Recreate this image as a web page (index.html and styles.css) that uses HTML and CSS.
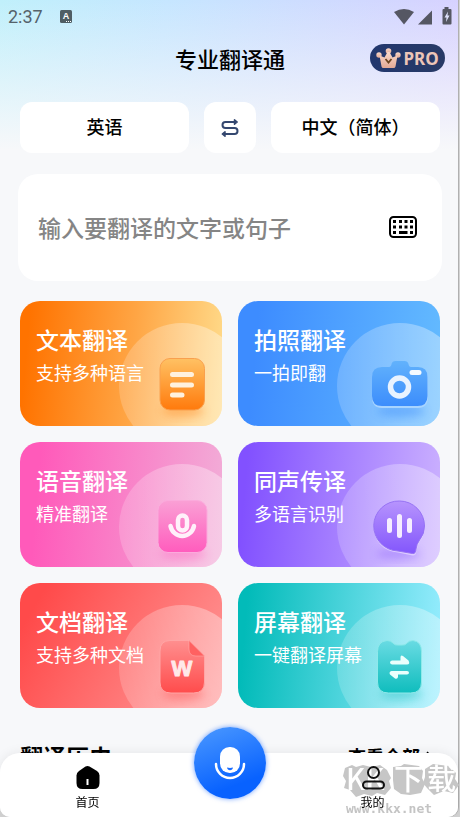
FILE: index.html
```html
<!DOCTYPE html>
<html lang="zh-CN">
<head>
  <meta charset="UTF-8">
  <meta name="viewport" content="width=device-width, initial-scale=1">
  <title>专业翻译通</title>
  <link rel="stylesheet" href="styles.css">
</head>
<body>
<div class="screen">
  <div class="status">
    <span class="time">2:37</span>
    <svg class="ime" width="12" height="13" viewBox="0 0 12 13">
      <rect width="12" height="13" rx="1.5" fill="#4f5d64"/>
      <text class="ime-text" x="6" y="9" text-anchor="middle">A</text>
      <path d="M6 11.5h1M8 11.5h1M10 11.5h1" stroke="#fff"/>
    </svg>
    <svg class="signal" width="58" height="18" viewBox="0 0 58 18">
      <path d="M0 5Q10-1 20 5L10 17.500Z" fill="#555763"/>
      <path d="M38 3.500V17.500H24Z" fill="#555763"/>
      <path d="M50.500 0h4v2h2q1 0 1 1v13.500q0 1-1 1h-7q-1 0-1-1V3q0-1 1-1h1Z" fill="#555763"/>
      <path d="M54 4.500l-3.500 6h2l-.5 4.500 3.500-6.500h-2Z" fill="#dfe2fb"/>
    </svg>
  </div>

  <header class="header">
    <h1>专业翻译通</h1>
    <button class="pro" type="button">
      <svg width="25" height="21" viewBox="0 0 25 21">
        <defs>
          <linearGradient id="crown" x1="0" y1="0" x2="0" y2="1">
            <stop offset="0" stop-color="#f9d9cb"/>
            <stop offset="1" stop-color="#e3a995"/>
          </linearGradient>
        </defs>
        <g fill="url(#crown)">
          <circle cx="12.500" cy="3" r="2.800"/>
          <circle cx="3" cy="7" r="2.700"/>
          <circle cx="22" cy="7" r="2.700"/>
          <path d="M3.500 7.500L8.500 9.500 11.500 4h2l3 5.500 5-2-2 11q-.3 1.500-2 1.500h-10q-1.700 0-2-1.500Z"/>
        </g>
        <path d="M9.500 11l3 3.500 3-3.500" fill="none" stroke="#6b4420" stroke-width="1.800"/>
      </svg>
      <span>PRO</span>
    </button>
  </header>

  <main class="main">
    <div class="langs">
      <button class="lang" type="button">英语</button>
      <button class="swap" type="button" aria-label="交换语言">
        <svg width="20" height="20" viewBox="0 0 20 20" fill="none" stroke="#34476f" stroke-width="2" stroke-linecap="round" stroke-linejoin="round">
          <path d="M15 4H5.500a3 3 0 0 0 0 6h9a3 3 0 0 1 0 6H5"/>
          <path d="M14.500 1.800L17.200 4l-2.700 2.200ZM5 13.800L2.300 16 5 18.200Z" fill="#34476f" stroke-width="1.500"/>
        </svg>
      </button>
      <button class="lang" type="button">中文（简体）</button>
    </div>

    <div class="input-box">
      <input type="text" aria-label="翻译内容" placeholder="输入要翻译的文字或句子">
      <button class="keyboard" type="button" aria-label="键盘">
        <svg width="28" height="22" viewBox="0 0 28 22">
          <rect x="1" y="1" width="26" height="20" rx="3.500" fill="none" stroke="#000" stroke-width="2"/>
          <path d="M4 5.500h3M10 5.500h3M15.500 5.500h3M21 5.500h3M4 11h3M10 11h3M15.500 11h3M21 11h3M4 16.500h3M10 16.500h8.500M21 16.500h3" stroke="#000" stroke-width="2.800"/>
        </svg>
      </button>
    </div>

    <div class="cards">
      <a class="card text" href="#">
        <strong>文本翻译</strong><span>支持多种语言</span>
        <svg class="art" viewBox="99 22 103 103">
          <defs>
            <linearGradient id="g1" x1="0" y1="0" x2="0" y2="1">
              <stop offset="0" stop-color="#ffc163"/>
              <stop offset="1" stop-color="#ff7a0c"/>
            </linearGradient>
            <linearGradient id="halo" x1="0" y1="0" x2="1" y2="0">
              <stop offset="0" stop-color="#fff" stop-opacity=".18"/>
              <stop offset="1" stop-color="#fff" stop-opacity=".4"/>
            </linearGradient>
            <filter id="soft" x="-50%" y="-50%" width="200%" height="200%">
              <feGaussianBlur stdDeviation="4"/>
            </filter>
          </defs>
          <circle cx="162" cy="85" r="63" fill="url(#halo)"/>
          <ellipse cx="163" cy="110" rx="21" ry="6" fill="#ff8a20" opacity=".45" filter="url(#soft)"/>
          <rect x="140" y="57.500" width="44.500" height="51.500" rx="10" fill="url(#g1)" stroke="#f9a04e"/>
          <path d="M152.500 73.500h19M152.500 84h19M152.500 94h9.500" stroke="#fff1de" stroke-width="5" stroke-linecap="round"/>
        </svg>
      </a>
      <a class="card photo" href="#">
        <strong>拍照翻译</strong><span>一拍即翻</span>
        <svg class="art" viewBox="99 22 103 103">
          <defs>
            <linearGradient id="g2" x1="0" y1="0" x2="0" y2="1">
              <stop offset="0" stop-color="#62b2fc"/>
              <stop offset="1" stop-color="#3c8dfc"/>
            </linearGradient>
          </defs>
          <circle cx="162" cy="85" r="63" fill="url(#halo)"/>
          <ellipse cx="163" cy="110" rx="24" ry="6" fill="#3c8dfc" opacity=".45" filter="url(#soft)"/>
          <path d="M144 67h7q2 0 2.500-3 .8-3 4-3h9q3.200 0 4 3 .5 3 2.500 3h7q10 0 10 10v19q0 11-10 11h-36q-10 0-10-11V77q0-10 10-10Z" fill="#a8d4ff"/>
          <path d="M144 66h7q2 0 2.500-3 .8-3 4-3h9q3.200 0 4 3 .5 3 2.500 3h7q9.500 0 9.500 10v19q0 10-10 10h-35.500q-10 0-10-10V76q0-10 10-10Z" fill="url(#g2)"/>
          <circle cx="161.500" cy="86" r="9" fill="none" stroke="#e9f3ff" stroke-width="5.500"/>
          <path d="M174 71.500h7" stroke="#f4faff" stroke-width="5" stroke-linecap="round"/>
        </svg>
      </a>
      <a class="card voice" href="#">
        <strong>语音翻译</strong><span>精准翻译</span>
        <svg class="art" viewBox="99 22 103 103">
          <defs>
            <linearGradient id="g3" x1="0" y1="0" x2="0" y2="1">
              <stop offset="0" stop-color="#faa0d5"/>
              <stop offset="1" stop-color="#ff5cbd"/>
            </linearGradient>
          </defs>
          <circle cx="162" cy="85" r="63" fill="url(#halo)"/>
          <ellipse cx="163" cy="112" rx="23" ry="6" fill="#ff5cbd" opacity=".4" filter="url(#soft)"/>
          <rect x="138" y="58.500" width="49" height="52" rx="10" fill="url(#g3)" stroke="#fbaadc"/>
          <rect x="158" y="73.500" width="9" height="15" rx="4.500" fill="none" stroke="#fff0fa" stroke-width="4.500"/>
          <path d="M150.500 84a12 12.500 0 0 0 23.500 0" fill="none" stroke="#fff0fa" stroke-width="4.500" stroke-linecap="round"/>
        </svg>
      </a>
      <a class="card live" href="#">
        <strong>同声传译</strong><span>多语言识别</span>
        <svg class="art" viewBox="99 22 103 103">
          <defs>
            <linearGradient id="g4" x1="0" y1="0" x2="0" y2="1">
              <stop offset="0" stop-color="#b794fd"/>
              <stop offset="1" stop-color="#8356fc"/>
            </linearGradient>
          </defs>
          <circle cx="162" cy="85" r="63" fill="url(#halo)"/>
          <ellipse cx="160" cy="112" rx="22" ry="5" fill="#8356fc" opacity=".4" filter="url(#soft)"/>
          <path d="M161.500 60.500a25 25 0 0 1 25 25q0 8-4.500 14-3 5-3.500 9.500-.5 5-4 4.500L160 110.500a25 25 0 0 1 1.500-50Z" fill="#dccbff"/>
          <path d="M161.500 59a25 25 0 0 1 25 25q0 8-5 14-3 4-3.500 9-.2 5-3.500 4.500L160 109a25 25 0 0 1 1.500-50Z" fill="url(#g4)" stroke="#9672f4"/>
          <path d="M151.500 78.500v10M161.500 74.500v19M171.500 78.500v10" stroke="#f6edff" stroke-width="5" stroke-linecap="round"/>
        </svg>
      </a>
      <a class="card doc" href="#">
        <strong>文档翻译</strong><span>支持多种文档</span>
        <svg class="art" viewBox="99 22 103 103">
          <defs>
            <linearGradient id="g5" x1="0" y1="0" x2="0" y2="1">
              <stop offset="0" stop-color="#ff8f8f"/>
              <stop offset="1" stop-color="#ff4c4c"/>
            </linearGradient>
          </defs>
          <circle cx="162" cy="85" r="63" fill="url(#halo)"/>
          <ellipse cx="163" cy="111" rx="21" ry="6" fill="#ff4c4c" opacity=".4" filter="url(#soft)"/>
          <path d="M150 57.500h19L184.500 73v26q0 11-11 11H151q-11 0-11-11V68q0-10.500 10-10.500Z" fill="url(#g5)" stroke="#ffa5a5"/>
          <path d="M169 57.500L184.500 73H176q-7 0-7-7Z" fill="#ff6161" stroke="#ffb0b0" stroke-width=".5"/>
          <text class="word" x="162" y="93" text-anchor="middle">W</text>
        </svg>
      </a>
      <a class="card display" href="#">
        <strong>屏幕翻译</strong><span>一键翻译屏幕</span>
        <svg class="art" viewBox="99 22 103 103">
          <defs>
            <linearGradient id="g6" x1="0" y1="0" x2="0" y2="1">
              <stop offset="0" stop-color="#69dbe3"/>
              <stop offset="1" stop-color="#0fbdbd"/>
            </linearGradient>
          </defs>
          <circle cx="162" cy="85" r="63" fill="url(#halo)"/>
          <ellipse cx="163" cy="111" rx="21" ry="6" fill="#0fbdbd" opacity=".4" filter="url(#soft)"/>
          <path d="M149 57.500q4 0 6 2.500t5 2h4q3 .5 5-2t6-2.500q8.500 1 8.500 11V99q0 11-11 11h-22q-11 0-11-11V68.500q0-10 9.500-11Z" fill="url(#g6)" stroke="#8ee9ea"/>
          <path d="M154 77.500h8.500v-3q0-3 2.500-1.500l5.500 4.500q2 4-1.500 4h-15q-2-.3-2-2t2-2ZM169 88h-15.500q-3 1-1.500 3.500l5 4q2.500 1 3-1.500v-2.500h9q2-.3 2-1.800t-2-1.700Z" fill="#eafffc"/>
        </svg>
      </a>
    </div>

    <div class="history">
      <h2>翻译历史</h2>
      <a href="#">查看全部<svg width="6" height="10" viewBox="0 0 6 10"><path d="M1 1l4 4-4 4" fill="none" stroke="#000" stroke-width="1.500"/></svg></a>
    </div>
  </main>

  <nav class="tabs">
    <svg class="mark" width="118" height="64" viewBox="0 -8 118 64" aria-hidden="true">
      <g fill="#c6c6c6">
        <path d="M3 7l7-3 4 2 7-2 8 2 9-2 7 5 4 8-2 3 2 7-6 7-8-2-5 3-8-2-8 3-6-7-6-2 2-7-3-5Z"/>
        <path d="M51 6l8-1 3-2 15 2 4 5-1 7 3 6-4 9-11 2-9-1-7-5-1-9Z"/>
        <path d="M83 8l8-5 8 1 8 1 7 7-1 6 4 6-6 8-9-2-10 4-7-7-4-5 2-6Z"/>
      </g>
      <text class="mark-name" y="29"><tspan x="4">KK</tspan><tspan x="52">下</tspan><tspan x="85">载</tspan></text>
      <text class="mark-url" x="4" y="52">www.kkx.net</text>
    </svg>
    <a class="tab" href="#">
      <svg width="26" height="26" viewBox="0 0 26 26">
        <path d="M10.500 1.600q2-1 4 0l7.500 4.400q2.500 1.800 2.500 4.500V18q0 6-6 6h-11q-6 0-6-6v-7.500q0-2.700 2.500-4.500Z"/>
        <path d="M12.500 14v6" stroke="#fff" stroke-width="2"/>
      </svg>
      <span>首页</span>
    </a>
    <button class="mic" type="button" aria-label="语音输入">
      <svg width="34" height="36" viewBox="0 0 34 36">
        <rect x="7" y="2" width="20" height="26" rx="9.500" fill="#fff"/>
        <path d="M14 22.500q3 .8 6 0-.5 2.800-3 2.800t-3-2.800Z" fill="#1c6dff"/>
        <path d="M3 19a14 14 0 0 0 28 0" fill="none" stroke="#fff" stroke-width="2.500" stroke-linecap="round"/>
      </svg>
    </button>
    <a class="tab" href="#">
      <svg width="26" height="26" viewBox="0 0 26 26" fill="none" stroke="#111" stroke-width="2">
        <circle cx="13.500" cy="7.500" r="5.500"/>
        <rect x="3" y="16.500" width="21" height="7" rx="3.500"/>
      </svg>
      <span>我的</span>
    </a>
  </nav>
</div>
</body>
</html>
```
FILE: styles.css
```css
*{
  margin: 0;
  padding: 0;
  box-sizing: border-box;
}
body{
  padding-right: 2px;
  background: #d4d4d4;
  color: #000;
  font-family: "Noto Sans CJK SC", "Noto Sans", sans-serif;
}
button{
  border: none;
  background: none;
  font-family: inherit;
  color: inherit;
}
a{
  color: inherit;
  text-decoration: none;
}
svg{
  display: block;
}
.screen{
  min-height: 100vh;
  border-radius: 0 0 10px 10px;
  background: linear-gradient(rgba(247, 248, 250, 0), #f7f8fa) top / 100% 150px no-repeat,
    linear-gradient(100deg, #c0f0fb, #c6e6ff 35%, #d8d0ff) top / 100% 150px no-repeat,
    #f7f8fa;
  box-shadow: 1px 0 0 #b0b0b0;
}
.status{
  display: flex;
  align-items: center;
  height: 32px;
  padding: 0 6px 0 8px;
}
.time{
  font-family: Roboto, sans-serif;
  font-size: 18px;
  color: #55626a;
}
.ime{
  margin-left: 17px;
}
.ime-text{
  font: bold 9px "Liberation Sans", sans-serif;
  fill: #fff;
}
.signal{
  margin-left: auto;
}
.header{
  display: grid;
  grid-template-columns: 1fr auto 1fr;
  align-items: center;
  height: 52px;
  padding: 0 13px 0 15px;
}
.header h1{
  grid-column: 2;
  font-size: 22px;
  font-weight: 500;
  line-height: 32px;
}
.pro{
  display: flex;
  justify-self: end;
  align-items: center;
  justify-content: center;
  gap: 2px;
  width: 75px;
  height: 28px;
  border-radius: 14px;
  background: linear-gradient(90deg, #22376e, #283a66);
}
.pro span{
  font: bold 17px "Noto Sans", sans-serif;
  color: #ecc5b8;
}
.main{
  padding: 18px 18px 0 20px;
}
.langs{
  display: flex;
  gap: 15px;
  height: 51px;
}
.lang, .swap{
  border-radius: 12px;
  background: #fff;
}
.lang{
  flex: 1;
  padding-bottom: 4px;
  font-size: 18px;
  font-weight: 500;
}
.swap{
  display: flex;
  align-items: center;
  justify-content: center;
  width: 52px;
}
.input-box{
  display: flex;
  align-items: center;
  height: 107px;
  margin: 21px -2px 20px;
  padding: 0 25px 2px 20px;
  border-radius: 20px;
  background: #fff;
}
.input-box input{
  flex: 1;
  min-width: 0;
  height: 40px;
  border: none;
  outline: none;
  background: none;
  font-family: inherit;
  font-size: 23px;
  font-weight: 500;
}
.input-box input::placeholder{
  color: #858585;
}
.cards{
  display: grid;
  grid-template-columns: 1fr 1fr;
  gap: 16px;
}
.card{
  position: relative;
  height: 125px;
  padding: 23px 16px 0;
  border-radius: 20px;
  overflow: hidden;
  color: #fff;
}
.card strong, .card span{
  display: block;
  position: relative;
  z-index: 1;
}
.card strong{
  font-size: 23px;
  font-weight: 500;
  line-height: 30px;
}
.card span{
  margin-top: 5px;
  font-size: 18px;
  font-weight: 400;
  line-height: 26px;
}
.art{
  position: absolute;
  right: 0;
  bottom: 0;
  width: 103px;
  height: 103px;
}
.text{
  background: linear-gradient(95deg, #ff7300 5%, #ffa544 55%, #ffdc8c);
}
.photo{
  background: linear-gradient(95deg, #3d8cff 10%, #64bbff);
}
.voice{
  background: linear-gradient(95deg, #ff5aba 10%, #f2aed8);
}
.live{
  background: linear-gradient(95deg, #8251ff 5%, #ccb2ff);
}
.doc{
  background: linear-gradient(120deg, #ff4a4a 10%, #ff9a9a);
}
.display{
  background: linear-gradient(95deg, #02bbb9 5%, #98edff);
}
.word{
  font: bold 22px "Liberation Sans", sans-serif;
  fill: #ffe9e9;
  stroke: #ffe9e9;
  stroke-width: 1px;
  stroke-linejoin: round;
}
.history{
  display: flex;
  align-items: center;
  justify-content: space-between;
  margin-top: 33px;
  padding-right: 8px;
}
.history h2{
  font-size: 23px;
  font-weight: 700;
  line-height: 30px;
}
.history a{
  display: flex;
  align-items: center;
  gap: 6px;
  font-size: 18px;
  font-weight: 700;
  line-height: 30px;
}
.tabs{
  position: fixed;
  left: 0;
  right: 2px;
  bottom: 0;
  z-index: 2;
  display: flex;
  height: 64px;
  padding: 0 14px 0 16px;
  border-radius: 20px 20px 10px 10px;
  background: #fff;
  box-shadow: 0 0 12px rgba(0, 0, 0, .08);
}
.tab{
  flex: 1;
  display: flex;
  flex-direction: column;
  align-items: center;
  padding-top: 12px;
  font-size: 12px;
  line-height: 22px;
}
.mic{
  display: flex;
  align-items: center;
  justify-content: center;
  width: 72px;
  height: 72px;
  margin: -26px 35px 0;
  border-radius: 50%;
  background: linear-gradient(160deg, #4392ff 10%, #0862ff 75%);
  box-shadow: 0 0 5px rgba(20, 100, 255, .6);
}
/* site mark behind the right tab */
.mark{
  position: absolute;
  right: -2px;
  bottom: 0;
  z-index: -1;
}
.mark-name{
  font: 500 29px "Noto Sans CJK SC", sans-serif;
  fill: #fff;
}
.mark-url{
  font: bold 13px "DejaVu Sans Mono", monospace;
  fill: #c4c4c4;
}
```
